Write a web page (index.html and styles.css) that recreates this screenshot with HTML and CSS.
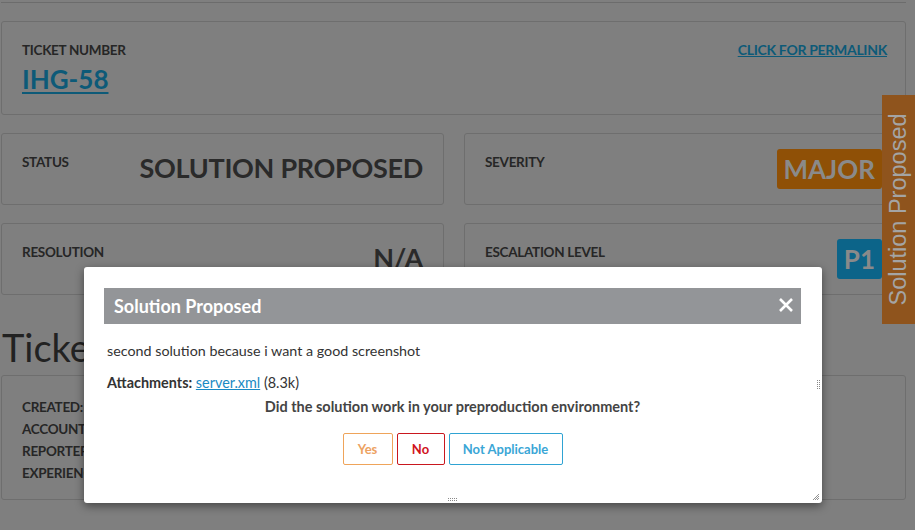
FILE: index.html
```html
<!DOCTYPE html>
<html>
<head>
<meta charset="utf-8">
<link rel="stylesheet" href="styles.css">
</head>
<body>
<div class="page">
  <div class="topline"></div>
  <div class="card ticket-card">
    <div class="ticket-left">
      <div class="label">TICKET NUMBER</div>
      <a class="ticket-id" href="#">IHG-58</a>
    </div>
    <a class="permalink" href="#">CLICK FOR PERMALINK</a>
  </div>
  <div class="grid">
    <div class="card field">
      <div class="label">STATUS</div>
      <div class="value">SOLUTION PROPOSED</div>
    </div>
    <div class="card field">
      <div class="label">SEVERITY</div>
      <div class="badge major">MAJOR</div>
    </div>
    <div class="card field">
      <div class="label">RESOLUTION</div>
      <div class="value na">N/A</div>
    </div>
    <div class="card field">
      <div class="label">ESCALATION LEVEL</div>
      <div class="badge p1">P1</div>
    </div>
  </div>
  <h2 class="section">Ticket</h2>
  <div class="card details">
    <div class="label">CREATED:</div>
    <div class="label">ACCOUNT</div>
    <div class="label">REPORTER</div>
    <div class="label">EXPERIENCE</div>
  </div>
</div>

<div class="side-tab"><span>Solution Proposed</span></div>

<div class="modal">
  <div class="modal-title">
    <span>Solution Proposed</span>
    <svg class="close" width="16" height="16" viewBox="0 0 16 16"><path d="M2 2 L14 14 M14 2 L2 14" stroke="#fff" stroke-width="2.6" stroke-linecap="butt"/></svg>
  </div>
  <div class="modal-body">
    <p class="desc">second solution because i want a good screenshot</p>
    <p class="attach"><b>Attachments:</b> <a href="#">server.xml</a> (8.3k)</p>
    <p class="question">Did the solution work in your preproduction environment?</p>
    <div class="buttons">
      <button class="btn yes">Yes</button>
      <button class="btn no">No</button>
      <button class="btn napp">Not Applicable</button>
    </div>
  </div>
  <svg class="grip grip-s" width="10" height="4" viewBox="0 0 10 4"><g fill="#888"><rect x="0" y="0" width="1" height="1"/><rect x="2" y="0" width="1" height="1"/><rect x="4" y="0" width="1" height="1"/><rect x="6" y="0" width="1" height="1"/><rect x="8" y="0" width="1" height="1"/><rect x="0" y="2" width="1" height="1"/><rect x="2" y="2" width="1" height="1"/><rect x="4" y="2" width="1" height="1"/><rect x="6" y="2" width="1" height="1"/><rect x="8" y="2" width="1" height="1"/></g></svg>
  <svg class="grip grip-e" width="4" height="10" viewBox="0 0 4 10"><g fill="#888"><rect x="0" y="0" width="1" height="1"/><rect x="0" y="2" width="1" height="1"/><rect x="0" y="4" width="1" height="1"/><rect x="0" y="6" width="1" height="1"/><rect x="0" y="8" width="1" height="1"/><rect x="2" y="0" width="1" height="1"/><rect x="2" y="2" width="1" height="1"/><rect x="2" y="4" width="1" height="1"/><rect x="2" y="6" width="1" height="1"/><rect x="2" y="8" width="1" height="1"/></g></svg>
  <svg class="grip grip-se" width="8" height="8" viewBox="0 0 8 8"><path d="M7 1 L1 7 M7 3 L3 7 M7 5 L5 7" stroke="#777" stroke-width="0.8"/></svg>
</div>
</body>
</html>
```

FILE: styles.css
```css
* { box-sizing: border-box; }
html, body { margin: 0; padding: 0; }
body {
  background: #7f7f7f;
  font-family: Lato, "Liberation Sans", sans-serif;
  color: #262626;
  width: 915px;
  height: 530px;
  overflow: hidden;
  position: relative;
}
.page {
  width: 905px;
  margin-left: 1px;
}
.topline {
  height: 3px;
  border-bottom: 1px solid #6c6c6c;
  margin-bottom: 18px;
}
.card {
  border: 1px solid #6e6e6e;
  border-radius: 3px;
}
.ticket-card {
  height: 94px;
  display: flex;
  justify-content: space-between;
  align-items: flex-start;
  padding: 20px 18px 0 20px;
}
.ticket-card .permalink { margin-top: -1px; }
.label {
  font-size: 13.5px;
  font-weight: 700;
  color: #262626;
  letter-spacing: -0.3px;
}
.ticket-id {
  display: inline-block;
  margin-top: 5px;
  font-size: 26px;
  font-weight: 700;
  color: #0d5a78;
  text-decoration: underline;
  text-underline-offset: 3px;
  text-decoration-thickness: 2px;
}
.permalink {
  font-size: 14px;
  font-weight: 700;
  color: #0d5a78;
  text-decoration: underline;
  letter-spacing: -0.3px;
}
.grid {
  display: grid;
  grid-template-columns: 443px 441px;
  column-gap: 20px;
  row-gap: 18px;
  margin-top: 18px;
}
.field {
  height: 72px;
  display: flex;
  justify-content: space-between;
  align-items: flex-start;
  padding: 20px 20px 0 20px;
}
.value {
  font-size: 27px;
  font-weight: 700;
  color: #2a2a2a;
  margin-top: -3px;
  letter-spacing: -0.3px;
}
.badge {
  font-size: 26px;
  font-weight: 700;
  color: #8a8a8a;
  padding: 1px 7px;
  line-height: 38px;
  border-radius: 3px;
  margin-top: -5px;
  margin-right: 2px;
}
.major { background: #8f5006; padding-left: 6px; }
.p1 { background: #0c6489; padding: 1px 7px; }
.section {
  font-size: 38px;
  font-weight: 400;
  margin: 29px 0 0 1px;
  line-height: 46px;
  color: #222;
}
.details {
  height: 125px;
  margin-top: 5px;
  padding: 20px 20px;
}
.details .label { line-height: 22px; }

.side-tab {
  position: absolute;
  left: 882px;
  top: 95px;
  width: 33px;
  height: 229px;
  background: #8f541d;
  display: flex;
  align-items: center;
  justify-content: center;
}
.side-tab span {
  transform: rotate(-90deg);
  white-space: nowrap;
  font-family: "Liberation Sans", Arial, sans-serif;
  font-size: 23.5px;
  color: #a4a4a4;
}

.modal {
  position: absolute;
  left: 84px;
  top: 267px;
  width: 738px;
  height: 236px;
  background: #fff;
  border-radius: 3px;
  box-shadow: 0 3px 10px rgba(0,0,0,0.45);
  padding: 21px 21px 0 20px;
}
.modal-title {
  height: 36px;
  background: #939598;
  display: flex;
  align-items: center;
  justify-content: space-between;
  padding: 0 7px 0 10px;
  color: #fff;
  font-size: 18px;
  font-weight: 700;
}
.close { display: block; margin-top: -2px; }
.modal-body {
  padding: 0 3px;
  font-size: 14.3px;
  color: #333;
}
.desc { margin: 17px 0 0 0; line-height: 20px; }
.attach { margin: 12px 0 0 0; line-height: 20px; font-size: 14.4px; }
.attach b { font-weight: 700; color: #333; }
.attach a { color: #1a8ac4; text-decoration: underline; }
.question {
  margin: 4px 0 0 0;
  text-align: center;
  font-weight: 700;
  font-size: 14.5px;
  color: #444;
  line-height: 20px;
}
.buttons {
  display: flex;
  justify-content: center;
  gap: 4px;
  margin-top: 16px;
}
.btn {
  height: 32px;
  background: #fff;
  border: 1px solid;
  border-radius: 2px;
  font-family: Lato, "Liberation Sans", sans-serif;
  font-size: 13px;
  font-weight: 700;
  padding: 0;
}
.yes { border-color: #efa45a; color: #eda262; width: 50px; }
.no { border-color: #c9171e; color: #d0131c; width: 48px; }
.napp { border-color: #2fa3d3; color: #3aa6d6; width: 114px; }

.grip { position: absolute; display: block; }
.grip-s { left: 364px; bottom: 1px; }
.grip-e { right: 1px; top: 113px; }
.grip-se { right: 2px; bottom: 2px; }
```
